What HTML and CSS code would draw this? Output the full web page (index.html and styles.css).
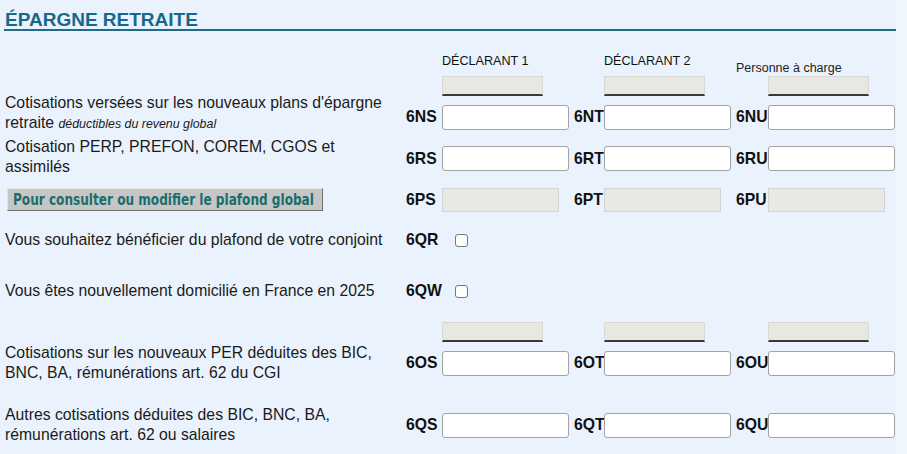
FILE: index.html
```html
<!DOCTYPE html>
<html lang="fr">
<head>
<meta charset="utf-8">
<title>Épargne retraite</title>
<link rel="stylesheet" href="styles.css">
</head>
<body>
<div class="page">
  <h1 class="title">ÉPARGNE RETRAITE</h1>

  <div class="row row-head">
    <div class="head head-decl c1">DÉCLARANT 1</div>
    <div class="head head-decl c2">DÉCLARANT 2</div>
    <div class="head head-pac c3h">Personne à charge</div>
    <div class="greybox c1 r2"></div>
    <div class="greybox c2 r2"></div>
    <div class="greybox c3 r2"></div>
  </div>

  <div class="row row-1">
    <div class="label label-up">Cotisations versées sur les nouveaux plans d'épargne retraite <em class="note">déductibles du revenu global</em></div>
    <div class="code">6NS</div><div class="cell"><input class="field" type="text"></div>
    <div class="code">6NT</div><div class="cell"><input class="field" type="text"></div>
    <div class="code">6NU</div><div class="cell"><input class="field" type="text"></div>
  </div>

  <div class="row row-2">
    <div class="label label-mid">Cotisation PERP, PREFON, COREM, CGOS et assimilés</div>
    <div class="code">6RS</div><div class="cell"><input class="field" type="text"></div>
    <div class="code">6RT</div><div class="cell"><input class="field" type="text"></div>
    <div class="code">6RU</div><div class="cell"><input class="field" type="text"></div>
  </div>

  <div class="row row-3">
    <div class="label"><button class="btn-plafond" type="button"><span class="btn-text">Pour consulter ou modifier le plafond global</span></button></div>
    <div class="code">6PS</div><div class="cell"><input class="field field-ro" type="text" readonly></div>
    <div class="code">6PT</div><div class="cell"><input class="field field-ro" type="text" readonly></div>
    <div class="code">6PU</div><div class="cell"><input class="field field-ro" type="text" readonly></div>
  </div>

  <div class="row row-qr">
    <div class="label">Vous souhaitez bénéficier du plafond de votre conjoint</div>
    <div class="code">6QR</div><div class="cell"><input class="check" type="checkbox"></div>
  </div>

  <div class="row row-qw">
    <div class="label">Vous êtes nouvellement domicilié en France en 2025</div>
    <div class="code">6QW</div><div class="cell"><input class="check" type="checkbox"></div>
  </div>

  <div class="row row-grey">
    <div class="greybox c1"></div>
    <div class="greybox c2"></div>
    <div class="greybox c3"></div>
  </div>

  <div class="row row-os">
    <div class="label label-up2">Cotisations sur les nouveaux PER déduites des BIC, BNC, BA, rémunérations art. 62 du CGI</div>
    <div class="code">6OS</div><div class="cell"><input class="field" type="text"></div>
    <div class="code">6OT</div><div class="cell"><input class="field" type="text"></div>
    <div class="code">6OU</div><div class="cell"><input class="field" type="text"></div>
  </div>

  <div class="row row-qs">
    <div class="label label-up2">Autres cotisations déduites des BIC, BNC, BA, rémunérations art. 62 ou salaires</div>
    <div class="code">6QS</div><div class="cell"><input class="field" type="text"></div>
    <div class="code">6QT</div><div class="cell"><input class="field" type="text"></div>
    <div class="code">6QU</div><div class="cell"><input class="field" type="text"></div>
  </div>
</div>
</body>
</html>
```

FILE: styles.css
```css
html, body {
  margin: 0;
  padding: 0;
  background: #f1f7fe;
}

body {
  font-family: "Liberation Sans", Arial, sans-serif;
  color: #111;
  overflow: hidden;
}

.page {
  width: 892px;
  padding-left: 4px;
  height: 454px;
  background: #eaf3fd;
}

.title {
  margin: 0;
  padding: 10px 0 0 1px;
  height: 19px;
  line-height: 19px;
  font-size: 19px;
  font-weight: bold;
  color: #17698a;
  border-bottom: 2px solid #1e6c86;
}

.row {
  display: grid;
  grid-template-columns: 402px 36px 132px 30px 132px 32px 127px;
  grid-template-rows: minmax(0, 1fr);
  align-items: center;
}

.row-head {
  height: 69px;
  grid-template-rows: minmax(0, 1fr) 20px;
  padding-bottom: 4px;
  box-sizing: border-box;
}

.head {
  grid-row: 1;
  align-self: end;
  white-space: nowrap;
  font-size: 12.6px;
  line-height: 15px;
  color: #111;
}

.head-decl { margin-bottom: 7px; }
.head-pac { margin-bottom: 0; font-size: 12.5px; color: #222; }

.c1 { grid-column: 3; }
.c2 { grid-column: 5; }
.c3 { grid-column: 7; }
.c3h { grid-column: 6 / span 2; }
.r2 { grid-row: 2; }

.greybox {
  width: 101px;
  height: 20px;
  box-sizing: border-box;
  background: #e8e8e3;
  border: 1px solid #d8d8d4;
  border-bottom: 2px solid #3a3a3a;
}

.row-grey {
  height: 28px;
  padding-top: 4px;
  box-sizing: border-box;
  align-items: start;
}

.label {
  grid-column: 1;
  max-width: 388px;
  padding-left: 1px;
  font-size: 15.75px;
  line-height: 20px;
  color: #1a1a1a;
}

/* two-line labels: margin box kept at one line height, shifted up */
.label-up { margin: -14px 0 -6px; }
.label-mid { margin: -12px 0 -8px; }
.label-up2 { margin: -10px 0 -10px; }

.note {
  font-size: 12.4px;
  line-height: 1;
}

.code {
  font-size: 15.75px;
  font-weight: bold;
  color: #111;
  white-space: nowrap;
}

.cell {
  display: flex;
  align-items: center;
}

.field {
  display: block;
  width: 127px;
  height: 25px;
  box-sizing: border-box;
  margin: 0;
  padding: 0 4px;
  background: #fff;
  border: 1px solid #a3a3a3;
  border-radius: 3px;
  font: inherit;
}

.field-ro {
  width: 117px;
  height: 24px;
  background: #e8e8e4;
  border: 1px solid #d4d4d0;
  border-radius: 0;
}

.check {
  appearance: none;
  -webkit-appearance: none;
  display: block;
  margin: 0 0 0 13px;
  width: 13px;
  height: 13px;
  box-sizing: border-box;
  background: #fff;
  border: 1px solid #777;
  border-radius: 3px;
}

.row-1 { height: 34px; }
.row-2 { height: 49px; }
.row-3 { height: 33px; }
.row-qr { height: 48px; }
.row-qw { height: 54px; }
.row-os { height: 34px; }
.row-qs { height: 90px; }

.btn-plafond {
  display: block;
  margin: 0 0 0 2px;
  padding: 0 0 0 5px;
  height: 23px;
  width: 316px;
  box-sizing: border-box;
  overflow: hidden;
  background: #c6c6c6;
  border: 1px solid;
  border-color: #e2e2e2 #6e6e6e #6e6e6e #e2e2e2;
  border-radius: 0;
  font-family: "DejaVu Sans Condensed", "DejaVu Sans", sans-serif;
  font-stretch: condensed;
  font-weight: bold;
  font-size: 16px;
  line-height: 20px;
  color: #1b6d6b;
  text-align: left;
  white-space: nowrap;
}

.btn-text {
  display: inline-block;
  transform: scaleX(0.84);
  transform-origin: left center;
}
```
